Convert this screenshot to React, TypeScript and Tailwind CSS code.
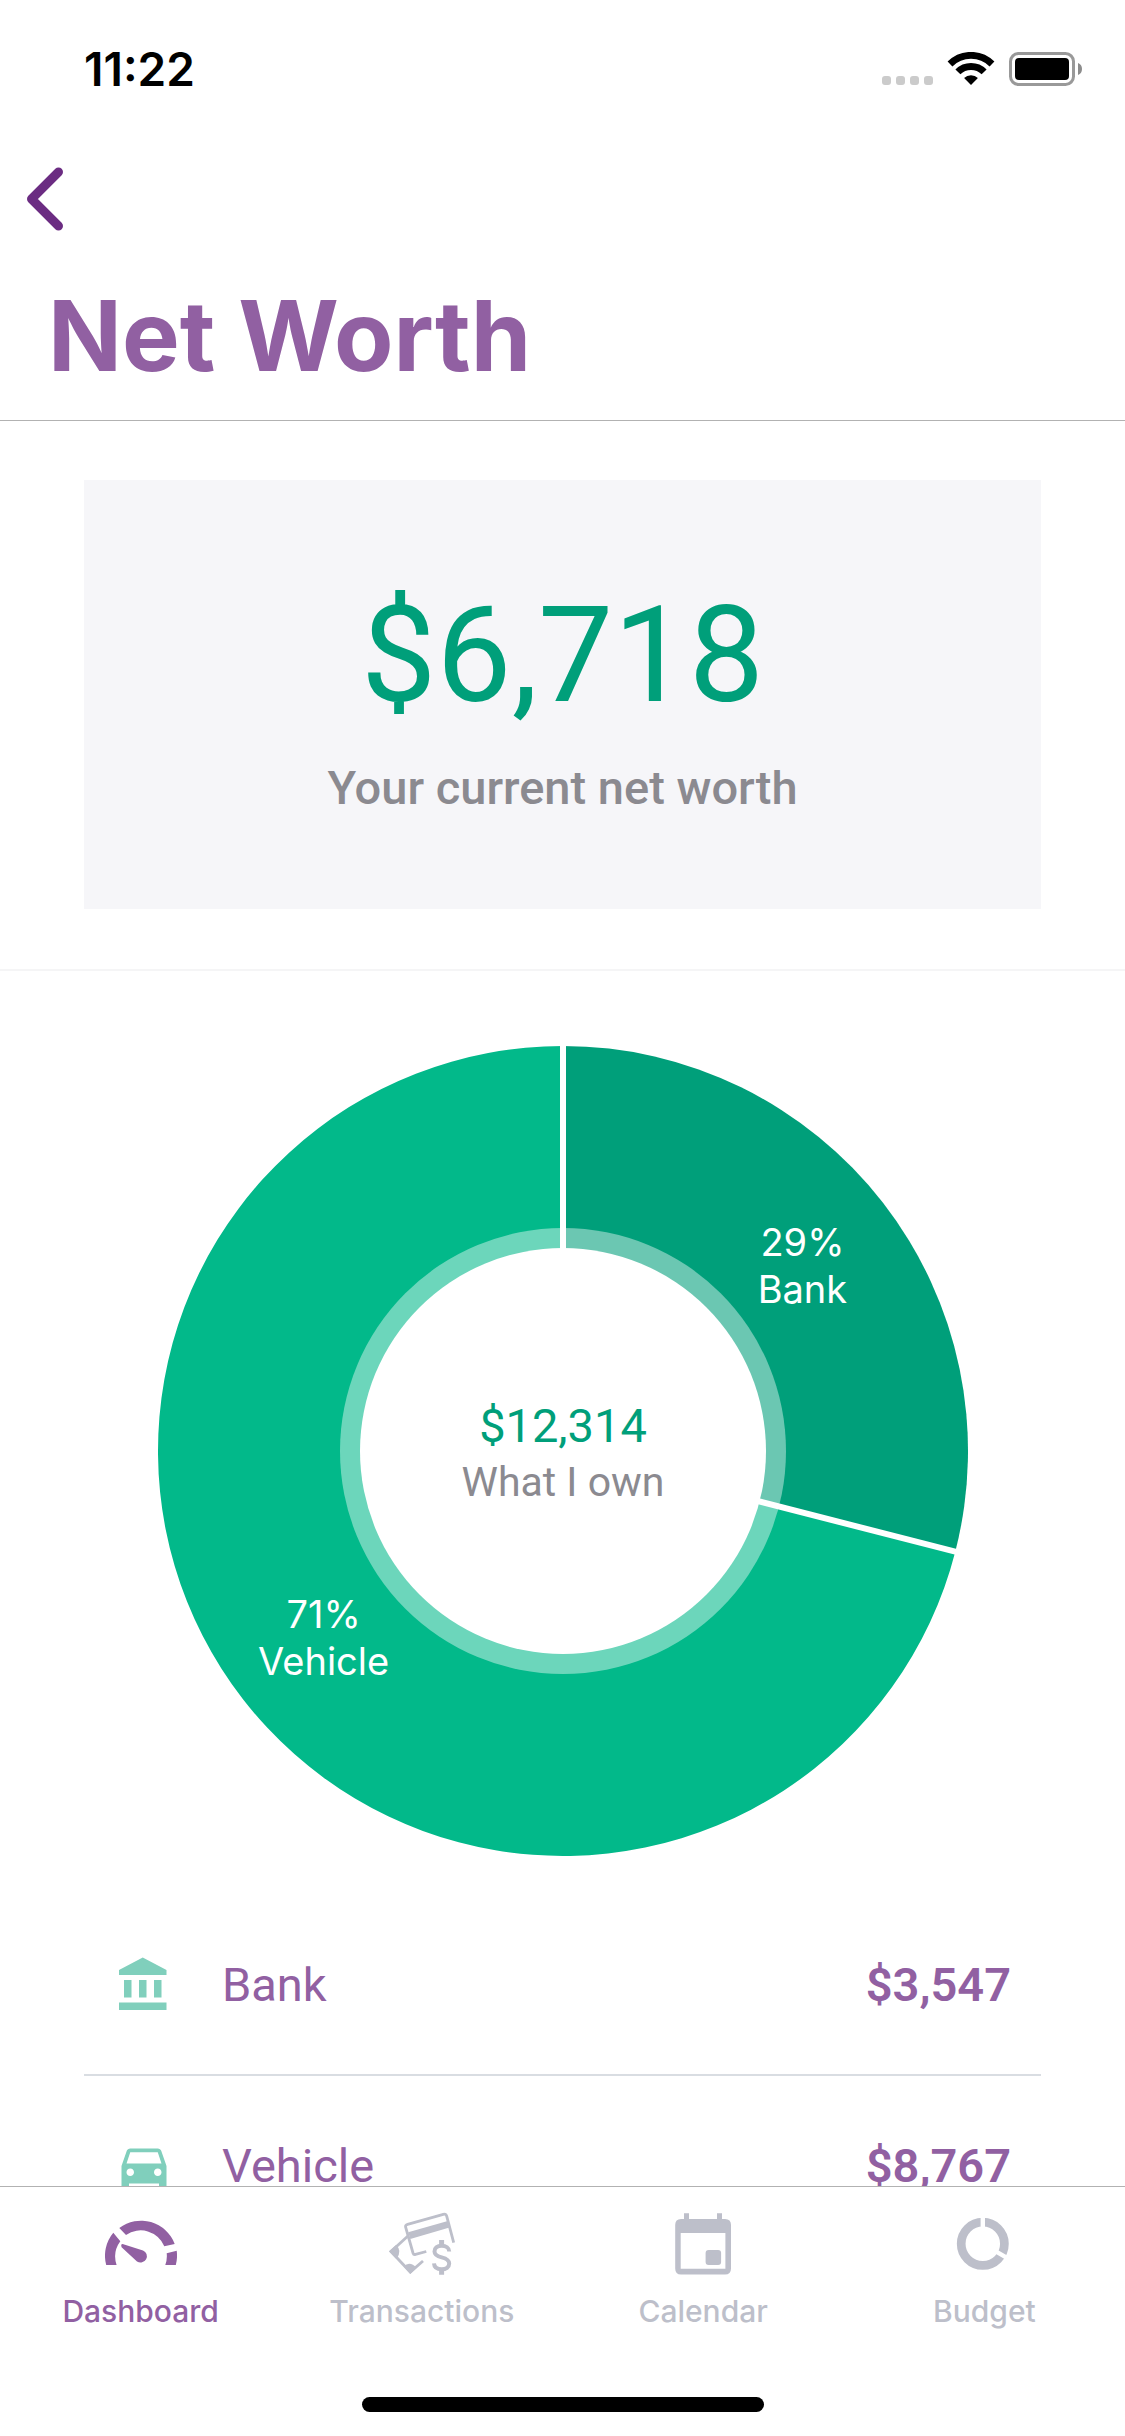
import React, { useState } from "react";
import { MdDirectionsCar } from "react-icons/md";

interface Asset {
  id: string;
  name: string;
  amount: number;
  color: string;
  icon: React.ReactNode;
}

function BankIcon() {
  return (
    <svg className="size-[60px]" viewBox="0 0 24 24" fill="currentColor" aria-hidden="true">
      <path d="M4 10v7h3v-7H4zm6 0v7h3v-7h-3zM2 22h19v-3H2v3zm14-12v7h3v-7h-3zm-4.500-9L2 6v2h19V6l-9.500-5z" />
    </svg>
  );
}

const assets: Asset[] = [
  { id: "bank", name: "Bank", amount: 3547, color: "#009f7a", icon: <BankIcon /> },
  { id: "vehicle", name: "Vehicle", amount: 8767, color: "#02b98a", icon: <MdDirectionsCar className="size-[60px]" /> }
];

const NET_WORTH = 6718;
const SIZE = 810;
const CENTER = SIZE / 2;

const money = (value: number) => `$${value.toLocaleString("en-US")}`;

// Point on a circle, with the position in percent of a turn counted clockwise from the top
const pointAt = (percent: number, radius: number) => {
  const angle = (percent / 100) * 2 * Math.PI;
  return { x: CENTER + radius * Math.sin(angle), y: CENTER - radius * Math.cos(angle) };
};

function StatusBar() {
  return (
    <div className="flex h-[137px] items-center justify-between pr-[42px] pl-[84px]">
      <span className="text-[46px] leading-none font-semibold text-black">11:22</span>
      <svg className="h-[34px] w-[202px]" viewBox="0 0 202 34" aria-hidden="true">
        <g fill="#cbcbcb">
          <rect x="1" y="24" width="9" height="9" rx="3" />
          <rect x="15" y="24" width="9" height="9" rx="3" />
          <rect x="29" y="24" width="9" height="9" rx="3" />
          <rect x="43" y="24" width="9" height="9" rx="3" />
        </g>
        <g transform="translate(67.3 0)">
          <path d="M1.7 12A29.7 29.7 0 0 1 43.7 12" fill="none" stroke="#000" strokeWidth="6.8" />
          <path d="M9.6 19.9A18.5 18.5 0 0 1 35.8 19.9" fill="none" stroke="#000" strokeWidth="7" />
          <path d="M22.7 33L15.8 26.1A9.9 9.9 0 0 1 29.6 26.1Z" />
        </g>
        <rect x="129.5" y="1.5" width="63" height="31" rx="8" fill="none" stroke="#999" strokeWidth="3" />
        <rect x="134" y="6" width="54" height="22" rx="4" />
        <path d="M197 11Q201 12.500 201 17T197 23Z" fill="#8c8c8c" />
      </svg>
    </div>
  );
}

function AssetChart() {
  const total = assets.reduce((sum, asset) => sum + asset.amount, 0);
  let used = 0;
  const slices = assets.map((asset) => {
    const percent = Math.round((asset.amount / total) * 100);
    const start = used;
    const end = start + percent;
    used = end;
    const from = pointAt(start, CENTER);
    const to = pointAt(end, CENTER);
    return {
      ...asset,
      start,
      percent,
      label: pointAt((start + end) / 2, 303),
      path: `M${CENTER} ${CENTER}L${from.x} ${from.y}A${CENTER} ${CENTER} 0 ${percent > 50 ? 1 : 0} 1 ${to.x} ${to.y}Z`
    };
  });

  return (
    <svg className="mx-auto mt-[75px] block w-[72%]" viewBox={`0 0 ${SIZE} ${SIZE}`} role="img" aria-label="What I own">
      {slices.map((slice) => (
        <path key={slice.id} d={slice.path} fill={slice.color} />
      ))}
      <circle cx={CENTER} cy={CENTER} r="223" fill="#fff" fillOpacity="0.42" />
      {/* Gaps between the slices */}
      {slices.map((slice) => {
        const edge = pointAt(slice.start, CENTER + 2);
        return <line key={slice.id} x1={CENTER} y1={CENTER} x2={edge.x} y2={edge.y} stroke="#fff" strokeWidth="6" />;
      })}
      <circle cx={CENTER} cy={CENTER} r="203" fill="#fff" />
      {slices.map((slice) => (
        <text key={slice.id} textAnchor="middle" fill="#fff" fontSize="38">
          <tspan x={slice.label.x} y={slice.label.y - 9}>{slice.percent}%</tspan>
          <tspan x={slice.label.x} dy="47">{slice.name}</tspan>
        </text>
      ))}
      <text x={CENTER} y="396" textAnchor="middle" fontSize="47" fill="#009f7a" className="font-[Roboto,sans-serif]">
        {money(total)}
      </text>
      <text x={CENTER} y="450" textAnchor="middle" fontSize="41" fill="#8b8a90" className="font-[Roboto,sans-serif]">
        What I own
      </text>
    </svg>
  );
}

function DashboardIcon() {
  return (
    <svg className="h-16 w-[72px]" viewBox="0 0 72 64" fill="currentColor" aria-hidden="true">
      <path d="M8.300 20.700A36 36 0 0 0 1.200 53H11.600A26 26 0 0 1 15.300 29.300Z" />
      <path d="M14.300 16A36 36 0 0 1 69.700 32L59.300 34.300A25.500 25.500 0 0 0 21 23Z" />
      <path d="M71.700 38.700A36 36 0 0 1 70.800 53H60.300A26 26 0 0 0 61.700 41.300Z" />
      <path d="M17.600 32L38 38.400A6.300 6.300 0 1 1 32 49.400L16.600 35.300Q15.500 32 17.600 32Z" />
    </svg>
  );
}

function TransactionsIcon() {
  return (
    <svg className="h-16 w-[72px]" viewBox="0 0 72 64" fill="none" stroke="currentColor" strokeWidth="2.8" aria-hidden="true">
      <path d="M67.700 30.600L60.700 4.200Q59.900 1.600 57.300 2.300L21.600 12.300Q19 13 19.700 15.400L27 41Q27.600 42.900 29.500 42.400L40.300 39.500" />
      <path d="M22.200 20.300L61.800 9L63.500 15.500L24.300 27Z" fill="currentColor" stroke="none" />
      <path d="M22.500 23.500L5 39.500L24.300 60L37 49" />
      <path d="M3 39.300L10 33Q16.500 38.500 10.500 47Z" fill="currentColor" stroke="none" />
      <path d="M24.300 62L17.500 54.500Q24 48.500 30.500 56Z" fill="currentColor" stroke="none" />
      <path
        d="M63.200 39.500C63.200 36 60 33.800 55.700 33.800C51 33.800 48.500 36.200 48.500 39.400C48.500 43 51.500 44.300 55.700 45.400C60.500 46.600 63.200 48.200 63.200 51.600C63.200 55.200 60 57.300 55.700 57.300C51 57.300 48.200 55 48 51.400"
        strokeWidth="4"
      />
      <path d="M55.600 28V33M55.600 58V62.700" strokeWidth="5" />
    </svg>
  );
}

function CalendarIcon() {
  return (
    <svg className="h-16 w-[72px]" viewBox="0 0 72 64" fill="currentColor" aria-hidden="true">
      <path
        fillRule="evenodd"
        d="M17 1.300H22V7H50V1.300H55V7H58Q64 7 64 13V56.500Q64 62.500 58 62.500H14Q8.200 62.500 8.200 56.500V13Q8.200 7 14 7H17ZM13.700 21V56.700H58.400V21Z"
      />
      <rect x="38.600" y="38" width="15.500" height="15" rx="3" />
    </svg>
  );
}

function BudgetIcon() {
  return (
    <svg className="h-16 w-[72px]" viewBox="0 0 72 64" aria-hidden="true">
      <circle cx="34.800" cy="31.800" r="21.600" fill="none" stroke="currentColor" strokeWidth="8.700" />
      <path d="M34.800 31.800V4M34.800 31.800L59 45.800" stroke="#fff" strokeWidth="4.400" />
    </svg>
  );
}

const tabs = [
  { id: "dashboard", label: "Dashboard", icon: <DashboardIcon /> },
  { id: "transactions", label: "Transactions", icon: <TransactionsIcon /> },
  { id: "calendar", label: "Calendar", icon: <CalendarIcon /> },
  { id: "budget", label: "Budget", icon: <BudgetIcon /> }
];

export default function App() {
  const [activeTab, setActiveTab] = useState("dashboard");

  return (
    <div className="flex h-screen flex-col bg-white font-[Inter,sans-serif]">
      <header className="shrink-0 border-b border-[#b2b2b2] pb-6">
        <StatusBar />
        <div className="flex h-[123px] items-center pl-[27px]">
          <button type="button" aria-label="Back" className="cursor-pointer text-[#6b2c82]">
            <svg className="h-16 w-9" viewBox="0 0 36 64" fill="none" aria-hidden="true">
              <path d="M31.500 5L4.500 32L31.500 59" stroke="currentColor" strokeWidth="9" strokeLinecap="round" strokeLinejoin="round" />
            </svg>
          </button>
        </div>
        <h1 className="mt-4 pl-12 text-[97px] leading-[120px] font-bold text-[#9160a2]">Net Worth</h1>
      </header>

      <main className="min-h-0 flex-1 overflow-y-auto [scrollbar-width:none]">
        <section className="border-b-2 border-[#f5f5f6] px-[84px] pt-[59px] pb-[60px]">
          <div className="bg-[#f6f6f9] pt-24 pb-[93px] text-center font-[Roboto,sans-serif]">
            <p className="text-[134px] leading-[160px] text-[#009f7a]">{money(NET_WORTH)}</p>
            <p className="mt-6 text-[47px] leading-[56px] font-medium text-[#8b8a90]">Your current net worth</p>
          </div>
        </section>

        <AssetChart />

        {/* Breakdown */}
        <ul className="mx-[84px] mt-[39px] font-[Roboto,sans-serif] text-[47px] leading-[56px] text-[#9160a2]">
          {assets.map((asset) => (
            <li key={asset.id} className="flex h-[181px] items-center gap-12 border-b-2 border-[#d9dde2] px-[30px]">
              <span className="text-[#80cfbc]">{asset.icon}</span>
              <span className="flex-1">{asset.name}</span>
              <span className="font-semibold">{money(asset.amount)}</span>
            </li>
          ))}
        </ul>
      </main>

      <footer className="shrink-0 border-t border-[#b2b2b2] bg-white pt-[25px] pb-6">
        <nav className="grid grid-cols-4">
          {tabs.map((tab) => (
            <button
              key={tab.id}
              type="button"
              onClick={() => setActiveTab(tab.id)}
              className={`flex cursor-pointer flex-col items-center gap-[17px] text-[30px] leading-9 font-medium ${
                activeTab === tab.id ? "text-[#9160a2]" : "text-[#bdbfca]"
              }`}
            >
              {tab.icon}
              <span>{tab.label}</span>
            </button>
          ))}
        </nav>
        <div className="mx-auto mt-[68px] h-[15px] w-[402px] rounded-full bg-black" />
      </footer>
    </div>
  );
}
